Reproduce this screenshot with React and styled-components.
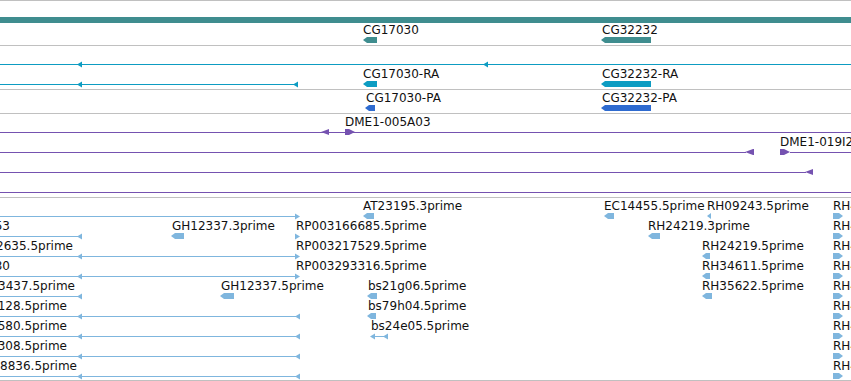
import styled, { createGlobalStyle } from "styled-components";

const GlobalStyle = createGlobalStyle`
  body {
    margin: 0;
    background: #fff;
    font-family: "DejaVu Sans", "Liberation Sans", sans-serif;
    overflow: hidden;
  }
`;

const TEAL = "#3f8d8f";
const CYAN = "#0d9cc2";
const BLUE = "#2e6bd0";
const PURPLE = "#7552b0";
const EST = "#7fb6de";

// conteneur de la vue : pistes empilées
const SView = styled.div`
  width: 851px;
  height: 381px;
  overflow: hidden;
  border-top: 1px solid #c0c0c0;
`;

const STrack = styled.section`
  padding-top: ${(p) => p.$padTop || 0}px;
  padding-bottom: ${(p) => p.$padBottom}px;
  border-bottom: 1px solid #c0c0c0;
`;

// une ligne de la piste, les objets y sont placés selon leur coordonnée
const SRow = styled.div`
  position: relative;
  height: 20px;
`;

const SLabel = styled.span`
  position: absolute;
  top: 2px;
  left: ${(p) => p.$x}px;
  transform: ${(p) => (p.$end ? "translateX(-100%)" : "none")};
  font-size: 12px;
  line-height: 12px;
  color: #111;
  white-space: nowrap;
`;

const SLine = styled.div`
  position: absolute;
  top: 18px;
  left: ${(p) => p.$x1}px;
  width: ${(p) => p.$x2 - p.$x1}px;
  height: 1px;
  background: ${(p) => p.$color};
`;

const SGlyph = styled.svg`
  position: absolute;
  top: 15px;
  left: ${(p) => p.$x}px;
  display: block;
  overflow: visible;
`;

function Block({ x1, x2, d, tip = 4, color }) {
  const w = x2 - x1;
  const h = 6;
  const t = Math.min(tip, w);
  let pts = `0,0 ${w},0 ${w},${h} 0,${h}`;
  if (d === "l") pts = `0,${h / 2} ${t},0 ${w},0 ${w},${h} ${t},${h}`;
  if (d === "r") pts = `0,0 ${w - t},0 ${w},${h / 2} ${w - t},${h} 0,${h}`;
  return (
    <SGlyph $x={x1} width={w} height={h}>
      <polygon points={pts} fill={color} />
    </SGlyph>
  );
}

function Head({ x, d, color }) {
  const pts = d === "l" ? "0,3.5 5,0.5 5,6.5" : "5,3.5 0,0.5 0,6.5";
  return (
    <SGlyph $x={x} width={5} height={6}>
      <polygon points={pts} fill={color} />
    </SGlyph>
  );
}

const lbl = (x, text, end) => ({ t: "label", x, text, end });
const line = (x1, x2) => ({ t: "line", x1, x2 });
const head = (x, d) => ({ t: "head", x, d });
const block = (x1, x2, d, tip) => ({ t: "block", x1, x2, d, tip });

const rh = [lbl(833, "RH44120.5prime"), block(833, 843, "r")];

const tracks = [
  {
    id: "gene",
    color: TEAL,
    padTop: 1,
    rows: [
      [block(0, 851)],
      [lbl(363, "CG17030"), block(363, 377, "l"), lbl(602, "CG32232"), block(601, 651, "l")],
    ],
  },
  {
    id: "mrna",
    color: CYAN,
    rows: [
      [line(0, 851), head(77, "l"), head(483, "l")],
      [
        line(0, 296),
        head(77, "l"),
        head(293, "l"),
        lbl(363, "CG17030-RA"),
        block(363, 377, "l"),
        lbl(602, "CG32232-RA"),
        block(601, 651, "l"),
      ],
    ],
  },
  {
    id: "prot",
    color: BLUE,
    rows: [[lbl(366, "CG17030-PA"), block(365, 375, "l"), lbl(602, "CG32232-PA"), block(601, 651, "l")]],
  },
  {
    id: "clone",
    color: PURPLE,
    rows: [
      [line(0, 851), block(321, 329, "l", 8), block(345, 355, "r", 6), lbl(345, "DME1-005A03")],
      [line(0, 746), block(745, 754, "l", 8), block(780, 790, "r", 6), line(790, 851), lbl(780, "DME1-019I21")],
      [line(0, 806), block(805, 813, "l", 8)],
      [line(0, 851)],
    ],
  },
  {
    id: "est",
    color: EST,
    rows: [
      [
        line(0, 296),
        head(295, "r"),
        lbl(363, "AT23195.3prime"),
        block(363, 374, "l"),
        lbl(604, "EC14455.5prime"),
        block(604, 614, "l"),
        lbl(707, "RH09243.5prime"),
        block(707, 711, "l", 4),
        ...rh,
      ],
      [
        lbl(10, "GH12453", true),
        line(0, 80),
        head(77, "l"),
        lbl(172, "GH12337.3prime"),
        block(171, 184, "l"),
        lbl(296, "RP003166685.5prime"),
        head(295, "r"),
        lbl(648, "RH24219.3prime"),
        block(648, 660, "l"),
        ...rh,
      ],
      [
        lbl(73, "RE12635.5prime", true),
        line(0, 296),
        head(77, "l"),
        head(295, "r"),
        lbl(296, "RP003217529.5prime"),
        lbl(702, "RH24219.5prime"),
        block(702, 710, "l"),
        ...rh,
      ],
      [
        lbl(10, "SD07930", true),
        line(0, 296),
        head(77, "l"),
        head(295, "r"),
        lbl(296, "RP003293316.5prime"),
        lbl(702, "RH34611.5prime"),
        block(702, 710, "l"),
        ...rh,
      ],
      [
        lbl(75, "LD13437.5prime", true),
        line(0, 80),
        head(77, "l"),
        lbl(221, "GH12337.5prime"),
        block(220, 234, "l"),
        lbl(368, "bs21g06.5prime"),
        block(367, 377, "l"),
        lbl(702, "RH35622.5prime"),
        block(702, 712, "l"),
        ...rh,
      ],
      [
        lbl(67, "RP0031128.5prime", true),
        line(0, 296),
        head(77, "l"),
        head(295, "l"),
        lbl(368, "bs79h04.5prime"),
        block(367, 376, "l"),
        ...rh,
      ],
      [
        lbl(67, "RP0031580.5prime", true),
        line(0, 296),
        head(77, "l"),
        head(295, "l"),
        lbl(371, "bs24e05.5prime"),
        head(370, "l"),
        line(374, 384),
        head(383, "l"),
        ...rh,
      ],
      [lbl(67, "RP0032308.5prime", true), line(0, 296), head(77, "l"), head(295, "l"), ...rh],
      [lbl(77, "RP0038836.5prime", true), line(0, 296), head(77, "l"), head(295, "l"), ...rh],
    ],
  },
];

function Item({ item, color }) {
  switch (item.t) {
    case "label":
      return (
        <SLabel $x={item.x} $end={item.end}>
          {item.text}
        </SLabel>
      );
    case "line":
      return <SLine $x1={item.x1} $x2={item.x2} $color={color} />;
    case "head":
      return <Head x={item.x} d={item.d} color={color} />;
    default:
      return <Block x1={item.x1} x2={item.x2} d={item.d} tip={item.tip} color={color} />;
  }
}

export default function App() {
  return (
    <>
      <GlobalStyle />
      <SView>
        {tracks.map((track) => (
          <STrack key={track.id} $padTop={track.padTop} $padBottom={track.id === "est" ? 2 : 3}>
            {track.rows.map((row, i) => (
              <SRow key={i}>
                {row.map((item, j) => (
                  <Item key={j} item={item} color={track.color} />
                ))}
              </SRow>
            ))}
          </STrack>
        ))}
      </SView>
    </>
  );
}
